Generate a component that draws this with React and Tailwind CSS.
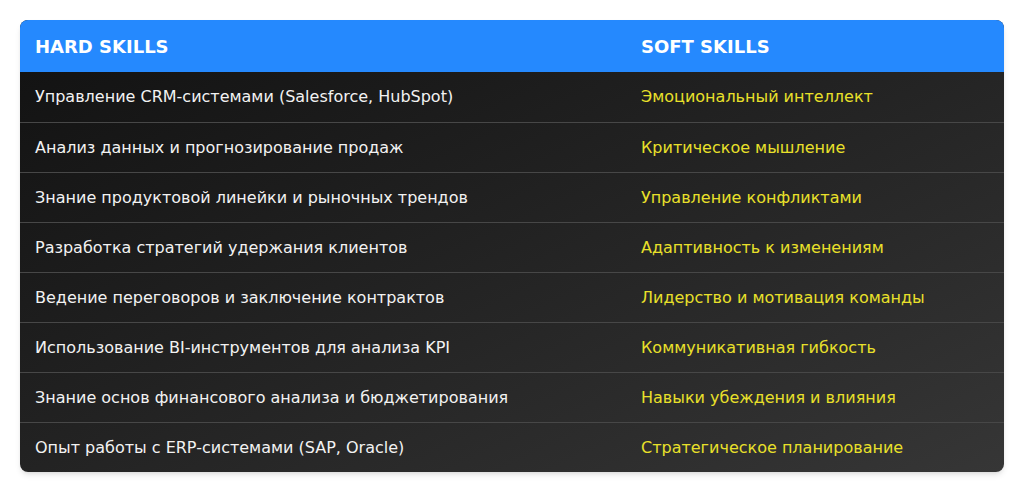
import React from 'react';

const rows = [
  ['Управление CRM-системами (Salesforce, HubSpot)', 'Эмоциональный интеллект'],
  ['Анализ данных и прогнозирование продаж', 'Критическое мышление'],
  ['Знание продуктовой линейки и рыночных трендов', 'Управление конфликтами'],
  ['Разработка стратегий удержания клиентов', 'Адаптивность к изменениям'],
  ['Ведение переговоров и заключение контрактов', 'Лидерство и мотивация команды'],
  ['Использование BI-инструментов для анализа KPI', 'Коммуникативная гибкость'],
  ['Знание основ финансового анализа и бюджетирования', 'Навыки убеждения и влияния'],
  ['Опыт работы с ERP-системами (SAP, Oracle)', 'Стратегическое планирование'],
];

const App = () => {
  return (
    <div className="bg-white p-5 font-[family-name:'DejaVu_Sans',sans-serif]">
      <div className="rounded-lg overflow-hidden bg-gradient-to-br from-[#111111] to-[#363636] shadow-md">
        {/* Header */}
        <div className="grid grid-cols-[606px_1fr] h-[52px] items-center bg-[#2589fe] text-white font-bold text-[18px]">
          <div className="px-[15px]">HARD SKILLS</div>
          <div className="px-[15px]">SOFT SKILLS</div>
        </div>

        {/* Rows */}
        {rows.map(([hard, soft], i) => (
          <div
            key={i}
            className={`grid grid-cols-[606px_1fr] h-[50px] items-center text-[16px] ${
              i > 0 ? 'border-t border-[#474747]' : ''
            }`}
          >
            <div className="px-[15px] text-[#f2f2f2]">{hard}</div>
            <div className="px-[15px] text-[#e9e02a]">{soft}</div>
          </div>
        ))}
      </div>
    </div>
  );
};

export default App;
